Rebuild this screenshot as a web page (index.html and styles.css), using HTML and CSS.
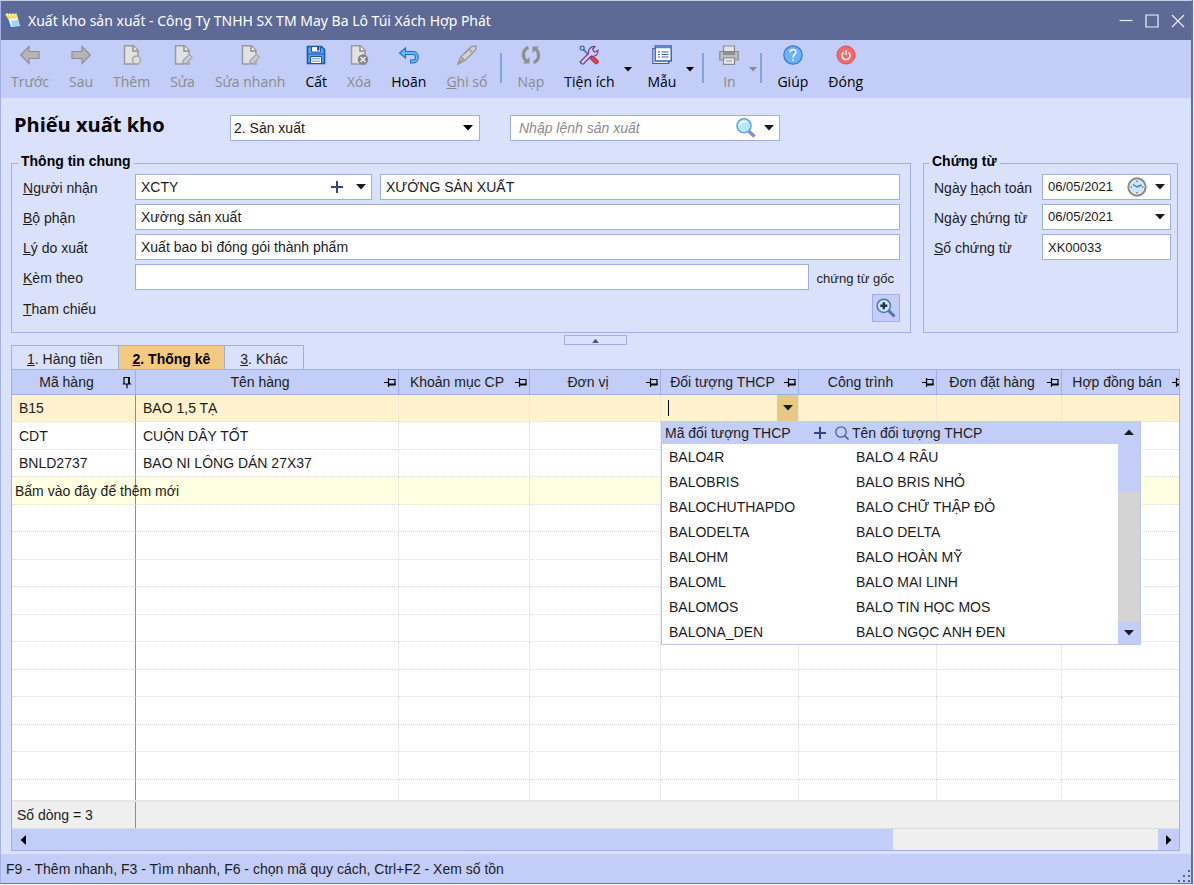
FILE: index.html
```html
<!DOCTYPE html>
<html lang="vi">
<head>
    <meta charset="UTF-8">
    <meta name="viewport" content="width=device-width, initial-scale=1.0">
    <title>Xuất kho sản xuất</title>
    <link rel="stylesheet" href="styles.css">
</head>
<body>

    <!-- Biểu tượng dùng chung -->
    <svg class="sprite" aria-hidden="true">
        <symbol id="arrow" viewBox="0 0 10 6"><path d="M0 0h10L5 5.500z" fill="currentColor"/></symbol>
        <symbol id="pin" viewBox="0 0 12 9">
            <path d="M0 4.500h4M4.500 0v9M4.500 1.500h6.500v5.500" fill="none" stroke="#000" stroke-width="1.200"/>
            <path d="M4.500 5.500h7v2h-7z"/>
        </symbol>
        <symbol id="page" viewBox="0 0 20 20">
            <path d="M2.500 .8h9l4.500 4.500v13.700h-13.500z" fill="#e2e2e2" stroke="#999" stroke-width="1.500"/>
            <path d="M11 1v5h5" fill="#f2f2f2" stroke="#8d8d8d" stroke-width="1.500"/>
        </symbol>
        <symbol id="page-edit" viewBox="0 0 20 20">
            <use href="#page"/>
            <path d="M9.500 19.300l.9-4 6-6 3 3-6 6z" fill="#ccc" stroke="#c2cef8" stroke-width="2"/>
            <path d="M9.500 19.300l.9-4 6-6 3 3-6 6z" fill="#ccc" stroke="#8d8d8d" stroke-width="1"/>
        </symbol>
        <symbol id="plus" viewBox="0 0 14 14"><path d="M7 1v12M1 7h12" stroke="#33467d" stroke-width="2" fill="none"/></symbol>
    </svg>

    <div class="window">
        <header class="titlebar">
            <svg class="logo" viewBox="0 0 18 18">
                <path d="M1 9l4 7 11-1-2-5z" fill="#3f66e8"/>
                <path d="M3 3l10 0 3 11-9 1z" fill="#e8f6fb"/>
                <path d="M7 9l7-1 1.500 5.500-7 .8z" fill="#9fd6ea"/>
                <path d="M1 2l11 0 1 4-9 1z" fill="#f6dc6a"/>
                <path d="M3 1v3M6 1v3M9 1v3M12 1v3" stroke="#fff7c8" stroke-width="1"/>
            </svg>
            <span class="caption">Xuất kho sản xuất - Công Ty TNHH SX TM May Ba Lô Túi Xách Hợp Phát</span>
            <button class="win-btn" aria-label="Thu nhỏ"><svg viewBox="0 0 14 14"><path d="M.5 6.500h13" stroke="#eef" stroke-width="1.200"/></svg></button>
            <button class="win-btn" aria-label="Phóng to"><svg viewBox="0 0 14 14"><path d="M1 1h12v12H1z" fill="none" stroke="#eef" stroke-width="1.200"/></svg></button>
            <button class="win-btn" aria-label="Đóng cửa sổ"><svg viewBox="0 0 14 14"><path d="M1 1l12 12M13 1L1 13" stroke="#eef" stroke-width="1.200"/></svg></button>
        </header>

        <nav class="toolbar">
            <button class="tool" disabled>
                <svg viewBox="0 0 20 20"><path d="M.8 10L9 1.500v5h10v7H9v5z" fill="#b5b5b5" stroke="#8f8f8f" stroke-width="1.200"/></svg>
                <span>Trước</span>
            </button>
            <button class="tool" disabled>
                <svg viewBox="0 0 20 20"><path d="M19.200 10L11 1.500v5H1v7h10v5z" fill="#b5b5b5" stroke="#8f8f8f" stroke-width="1.200"/></svg>
                <span>Sau</span>
            </button>
            <button class="tool" disabled>
                <svg viewBox="0 0 20 20">
                    <use href="#page"/>
                    <circle cx="14.500" cy="15" r="4" fill="#ddd" stroke="#aaa" stroke-width="1.600"/>
                </svg>
                <span>Thêm</span>
            </button>
            <button class="tool" disabled>
                <svg><use href="#page-edit"/></svg>
                <span>Sửa</span>
            </button>
            <button class="tool" disabled>
                <svg><use href="#page-edit"/></svg>
                <span>Sửa nhanh</span>
            </button>
            <button class="tool">
                <svg viewBox="0 0 20 20">
                    <path d="M1.500 1.500h14l3 3v14h-17z" fill="#5aa5ee" stroke="#1558b4" stroke-width="1.600"/>
                    <path d="M5.500 1.500h9v5.500h-9z" fill="#fff" stroke="#1558b4"/>
                    <path d="M11 2h2.500v3.500H11z" fill="#1558b4"/>
                    <path d="M1.500 9h17" stroke="#1558b4"/>
                    <path d="M4.500 11.500h11v7h-11z" fill="#fff" stroke="#1558b4"/>
                    <path d="M6 13.800h8M6 16.200h8" stroke="#6a8fce"/>
                </svg>
                <span>Cất</span>
            </button>
            <button class="tool" disabled>
                <svg viewBox="0 0 20 20">
                    <use href="#page"/>
                    <circle cx="14" cy="14.500" r="5.200" fill="#858585"/>
                    <path d="M11.500 12l5 5M16.500 12l-5 5" stroke="#eee" stroke-width="1.600"/>
                </svg>
                <span>Xóa</span>
            </button>
            <button class="tool">
                <svg viewBox="0 0 20 20">
                    <path d="M5 8h9.500c4.500 0 4.500 8.500 0 8.500H11" fill="none" stroke="#1f6fd0" stroke-width="4"/>
                    <path d="M.5 8l6-5v10z" fill="#6db6f8" stroke="#1f6fd0" stroke-width="1.200"/>
                    <path d="M5 8h9.500c4.500 0 4.500 8.500 0 8.500H12" fill="none" stroke="#6db6f8" stroke-width="1.800"/>
                </svg>
                <span>Hoãn</span>
            </button>
            <button class="tool" disabled>
                <svg viewBox="0 0 20 20">
                    <path d="M.8 19.300l3-7.500L14.500 1.500l4.500-.5-.5 4L8 15.500z" fill="#d2d2d2" stroke="#969696" stroke-width="1.300"/>
                    <path d="M4 11.800l4 3.800M12 4l3.800 3.800M1 19l5-5M7 9L13 3" fill="none" stroke="#969696" stroke-width="1.200"/>
                </svg>
                <span><u>G</u>hi sổ</span>
            </button>
            <span class="sep"></span>
            <button class="tool" disabled>
                <svg viewBox="0 0 20 20">
                    <path d="M7.500 2.500C1.500 4.500 1 11.500 5 16" fill="none" stroke="#8f8f8f" stroke-width="3.200"/>
                    <path d="M2 18.500h6.500V12z" fill="#8f8f8f"/>
                    <path d="M12.500 17.500C18.500 15.500 19 8.500 15 4" fill="none" stroke="#8f8f8f" stroke-width="3.200"/>
                    <path d="M18 1.500h-6.500V8z" fill="#8f8f8f"/>
                </svg>
                <span>Nạp</span>
            </button>
            <button class="tool">
                <svg viewBox="0 0 20 20">
                    <circle cx="3.200" cy="3.200" r="2" fill="none" stroke="#4c66a4" stroke-width="1.300"/>
                    <path d="M4.500 4.500l7 7.500" stroke="#4c66a4" stroke-width="1.500"/>
                    <path d="M11 13.500l2.500-2.500 5.500 4.500c1 2-1 4-3 3z" fill="#e94040" stroke="#a31e2e"/>
                    <path d="M3 19L1 17l8.500-8.500C9 4.500 11.500 1 16 1.500L13.500 4.500l2 2.500 3.500-1.700c.4 4.700-3 6.700-6.800 5.700L4.500 19z" fill="#d9c8f2" stroke="#6b3c93" stroke-width="1.200"/>
                </svg>
                <span>Tiện ích</span>
            </button>
            <button class="more" aria-label="Mở tiện ích"><svg><use href="#arrow"/></svg></button>
            <button class="tool">
                <svg viewBox="0 0 20 20">
                    <path d="M.8 3.500h16v15h-16z" fill="#e8eefc" stroke="#3f5fa8" stroke-width="1.200"/>
                    <path d="M3.200 1h16v15h-16z" fill="#fff" stroke="#3f5fa8" stroke-width="1.400"/>
                    <path d="M3.500 2.300h15.500" stroke="#5c87d6" stroke-width="2"/>
                    <path d="M6 7h2M6 9.500h2M6 12h2M9.500 7h7M9.500 9.500h7M9.500 12h7" stroke="#3f5fa8" stroke-width="1.200"/>
                </svg>
                <span>Mẫu</span>
            </button>
            <button class="more" aria-label="Mở danh sách mẫu"><svg><use href="#arrow"/></svg></button>
            <span class="sep"></span>
            <button class="tool" disabled>
                <svg viewBox="0 0 20 20">
                    <path d="M4.500 1h11v6h-11z" fill="#e4e4e4" stroke="#8a8a8a" stroke-width="1.200"/>
                    <path d="M.8 6.500h18.400v8.500H.8z" fill="#bdbdbd" stroke="#8a8a8a" stroke-width="1.200"/>
                    <path d="M4 7h12v3H4z" fill="#8f8f8f"/>
                    <path d="M4.500 13h11v6.300h-11z" fill="#eee" stroke="#8a8a8a" stroke-width="1.200"/>
                    <path d="M7 16h6" stroke="#8a8a8a"/>
                </svg>
                <span>In</span>
            </button>
            <button class="more" aria-label="Tùy chọn in" disabled><svg><use href="#arrow"/></svg></button>
            <span class="sep"></span>
            <button class="tool">
                <svg viewBox="0 0 20 20">
                    <circle cx="10" cy="10" r="9.200" fill="#6fb0fb" stroke="#3578d0" stroke-width="1.200"/>
                    <path d="M7.200 7.300c0-3.800 5.800-3.700 5.800-.3 0 2.300-3 2.500-3 5.500M10 14.300v1.600" fill="none" stroke="#fff" stroke-width="1.500"/>
                </svg>
                <span>Giúp</span>
            </button>
            <button class="tool">
                <svg viewBox="0 0 20 20">
                    <circle cx="10" cy="10" r="9" fill="#f8696b" stroke="#e24a50" stroke-width="1"/>
                    <path d="M7.500 7.300a4 4 0 1 0 5 0M10 5v5" fill="none" stroke="#fff" stroke-width="1.500"/>
                </svg>
                <span>Đóng</span>
            </button>
        </nav>

        <main class="content">
            <div class="heading">
                <h1>Phiếu xuất kho</h1>
                <select class="field type-select" aria-label="Loại phiếu">
                    <option>2. Sản xuất</option>
                </select>
                <div class="field combo search">
                    <input type="text" placeholder="Nhập lệnh sản xuất" aria-label="Lệnh sản xuất">
                    <button aria-label="Tìm lệnh">
                        <svg class="lens" viewBox="0 0 20 20">
                            <path d="M12.500 13l6 5.500" stroke="#8f87d8" stroke-width="3.600"/>
                            <circle cx="8" cy="7.800" r="7" fill="#b9e8f8" stroke="#5aa9dc" stroke-width="1.600"/>
                            <path d="M3.500 7c1-3 4-4.500 7-3" fill="none" stroke="#ecfaff" stroke-width="2"/>
                        </svg>
                    </button>
                    <button aria-label="Mở danh sách lệnh"><svg class="arrow"><use href="#arrow"/></svg></button>
                </div>
            </div>

            <div class="groups">
                <fieldset class="general">
                    <legend>Thông tin chung</legend>
                    <div class="form-grid">
                        <label for="receiver"><u>N</u>gười nhận</label>
                        <div class="line">
                            <div class="field combo receiver">
                                <input type="text" id="receiver" value="XCTY">
                                <button aria-label="Thêm người nhận"><svg class="plus"><use href="#plus"/></svg></button>
                                <button aria-label="Chọn người nhận"><svg class="arrow"><use href="#arrow"/></svg></button>
                            </div>
                            <input type="text" class="field grow" value="XƯỞNG SẢN XUẤT" aria-label="Tên người nhận">
                        </div>
                        <label for="dept"><u>B</u>ộ phận</label>
                        <input type="text" class="field" id="dept" value="Xưởng sản xuất">
                        <label for="reason"><u>L</u>ý do xuất</label>
                        <input type="text" class="field" id="reason" value="Xuất bao bì đóng gói thành phẩm">
                        <label for="attach"><u>K</u>èm theo</label>
                        <div class="line">
                            <input type="text" class="field grow" id="attach">
                            <span class="suffix">chứng từ gốc</span>
                        </div>
                        <label for="ref"><u>T</u>ham chiếu</label>
                        <button class="ref-btn" id="ref">
                            <svg viewBox="0 0 20 20">
                                <path d="M12 12l6.500 6.500" stroke="#5a6db8" stroke-width="3"/>
                                <circle cx="7.800" cy="7.800" r="6.600" fill="#c4eafa" stroke="#5870b4" stroke-width="1.500"/>
                                <path d="M7.800 4.300v7M4.300 7.800h7" stroke="#263040" stroke-width="2.400"/>
                            </svg>
                        </button>
                    </div>
                </fieldset>

                <fieldset class="voucher">
                    <legend>Chứng từ</legend>
                    <div class="form-grid">
                        <label for="post-date">Ngày <u>h</u>ạch toán</label>
                        <div class="field combo">
                            <input type="text" id="post-date" value="06/05/2021">
                            <button aria-label="Chọn giờ">
                                <svg class="clock" viewBox="0 0 20 20">
                                    <circle cx="10" cy="10" r="8.600" fill="#c2e9f8" stroke="#8c8c8c" stroke-width="2.200"/>
                                    <circle cx="10" cy="10" r="7" fill="none" stroke="#eee" stroke-width="1"/>
                                    <path d="M10 10L6 7.500M10 10l4.500-2" stroke="#3f7fae" stroke-width="1.400"/>
                                    <path d="M10 3.500v1.500M10 15v1.500M3.500 10H5M15 10h1.500" stroke="#e05050" stroke-width="1.500"/>
                                </svg>
                            </button>
                            <button aria-label="Mở lịch hạch toán"><svg class="arrow"><use href="#arrow"/></svg></button>
                        </div>
                        <label for="doc-date">Ngày <u>c</u>hứng từ</label>
                        <div class="field combo">
                            <input type="text" id="doc-date" value="06/05/2021">
                            <button aria-label="Mở lịch chứng từ"><svg class="arrow"><use href="#arrow"/></svg></button>
                        </div>
                        <label for="doc-no"><u>S</u>ố chứng từ</label>
                        <input type="text" class="field" id="doc-no" value="XK00033">
                    </div>
                </fieldset>
            </div>

            <button class="collapse" aria-label="Thu gọn"><svg viewBox="0 0 10 6"><path d="M1 6L5 1l4 5z" fill="#555"/></svg></button>

            <div class="tabs" role="tablist">
                <button class="tab" role="tab"><u>1</u>. Hàng tiền</button>
                <button class="tab active" role="tab" aria-selected="true"><u>2</u>. Thống kê</button>
                <button class="tab" role="tab"><u>3</u>. Khác</button>
            </div>

            <div class="grid">
                <div class="grid-body">
                    <table class="items">
                        <colgroup>
                            <col class="c-code"><col><col class="c-mid"><col class="c-mid"><col class="c-object"><col class="c-object"><col class="c-order"><col class="c-order">
                        </colgroup>
                        <thead>
                            <tr>
                                <th><div class="th"><span>Mã hàng</span><svg class="pin pinned"><use href="#pin"/></svg></div></th>
                                <th><div class="th"><span>Tên hàng</span><svg class="pin"><use href="#pin"/></svg></div></th>
                                <th><div class="th"><span>Khoản mục CP</span><svg class="pin"><use href="#pin"/></svg></div></th>
                                <th><div class="th"><span>Đơn vị</span><svg class="pin"><use href="#pin"/></svg></div></th>
                                <th><div class="th"><span>Đối tượng THCP</span><svg class="pin"><use href="#pin"/></svg></div></th>
                                <th><div class="th"><span>Công trình</span><svg class="pin"><use href="#pin"/></svg></div></th>
                                <th><div class="th"><span>Đơn đặt hàng</span><svg class="pin"><use href="#pin"/></svg></div></th>
                                <th><div class="th"><span>Hợp đồng bán</span><svg class="pin"><use href="#pin"/></svg></div></th>
                            </tr>
                        </thead>
                        <tbody>
                            <tr class="current">
                                <td>B15</td><td>BAO 1,5 TẠ</td><td></td><td></td>
                                <td class="editing">
                                    <div class="editor">
                                        <span class="caret"></span>
                                        <input type="text" aria-label="Đối tượng THCP">
                                        <button aria-label="Chọn đối tượng THCP"><svg class="arrow"><use href="#arrow"/></svg></button>
                                    </div>
                                    <div class="popup">
                                        <table class="lookup">
                                            <colgroup><col class="c-lookup"><col></colgroup>
                                            <thead>
                                                <tr>
                                                    <th>
                                                        <div class="lookup-head">
                                                            <span>Mã đối tượng THCP</span>
                                                            <button aria-label="Thêm đối tượng"><svg class="plus"><use href="#plus"/></svg></button>
                                                            <button aria-label="Tìm đối tượng"><svg class="plus" viewBox="0 0 14 14"><circle cx="6" cy="6" r="5.200" fill="none" stroke="#4c5f98" stroke-width="1.300"/><path d="M9.500 9.500l4 4" stroke="#4c5f98" stroke-width="1.600"/></svg></button>
                                                        </div>
                                                    </th>
                                                    <th>Tên đối tượng THCP</th>
                                                </tr>
                                            </thead>
                                            <tbody>
                                                <tr><td>BALO4R</td><td>BALO 4 RÂU</td></tr>
                                                <tr><td>BALOBRIS</td><td>BALO BRIS NHỎ</td></tr>
                                                <tr><td>BALOCHUTHAPDO</td><td>BALO CHỮ THẬP ĐỎ</td></tr>
                                                <tr><td>BALODELTA</td><td>BALO DELTA</td></tr>
                                                <tr><td>BALOHM</td><td>BALO HOÀN MỸ</td></tr>
                                                <tr><td>BALOML</td><td>BALO MAI LINH</td></tr>
                                                <tr><td>BALOMOS</td><td>BALO TIN HỌC MOS</td></tr>
                                                <tr><td>BALONA_DEN</td><td>BALO NGỌC ANH ĐEN</td></tr>
                                            </tbody>
                                        </table>
                                        <div class="vscroll">
                                            <button aria-label="Cuộn lên"><svg class="arrow up"><use href="#arrow"/></svg></button>
                                            <span class="vthumb"></span>
                                            <button aria-label="Cuộn xuống"><svg class="arrow"><use href="#arrow"/></svg></button>
                                        </div>
                                    </div>
                                </td>
                                <td></td><td></td><td></td>
                            </tr>
                            <tr><td>CDT</td><td>CUỘN DÂY TỐT</td><td></td><td></td><td></td><td></td><td></td><td></td></tr>
                            <tr><td>BNLD2737</td><td>BAO NI LÔNG DÁN 27X37</td><td></td><td></td><td></td><td></td><td></td><td></td></tr>
                            <tr class="new-row"><td>Bấm vào đây để thêm mới</td><td></td><td></td><td></td><td></td><td></td><td></td><td></td></tr>
                            <tr><td></td><td></td><td></td><td></td><td></td><td></td><td></td><td></td></tr>
                            <tr><td></td><td></td><td></td><td></td><td></td><td></td><td></td><td></td></tr>
                            <tr><td></td><td></td><td></td><td></td><td></td><td></td><td></td><td></td></tr>
                            <tr><td></td><td></td><td></td><td></td><td></td><td></td><td></td><td></td></tr>
                            <tr><td></td><td></td><td></td><td></td><td></td><td></td><td></td><td></td></tr>
                            <tr><td></td><td></td><td></td><td></td><td></td><td></td><td></td><td></td></tr>
                            <tr><td></td><td></td><td></td><td></td><td></td><td></td><td></td><td></td></tr>
                            <tr><td></td><td></td><td></td><td></td><td></td><td></td><td></td><td></td></tr>
                            <tr><td></td><td></td><td></td><td></td><td></td><td></td><td></td><td></td></tr>
                            <tr><td></td><td></td><td></td><td></td><td></td><td></td><td></td><td></td></tr>
                            <tr><td></td><td></td><td></td><td></td><td></td><td></td><td></td><td></td></tr>
                        </tbody>
                    </table>
                </div>
                <div class="summary"><span>Số dòng = 3</span></div>
                <div class="hscroll">
                    <button aria-label="Cuộn trái"><svg viewBox="0 0 6 10"><path d="M6 0v10L.5 5z"/></svg></button>
                    <span class="hthumb"></span>
                    <span class="htrack"></span>
                    <button aria-label="Cuộn phải"><svg viewBox="0 0 6 10"><path d="M0 0v10l5.500-5z"/></svg></button>
                </div>
            </div>
        </main>

        <footer class="statusbar">
            <span>F9 - Thêm nhanh, F3 - Tìm nhanh, F6 - chọn mã quy cách, Ctrl+F2 - Xem số tồn</span>
            <svg class="grip" viewBox="0 0 14 14"><path d="M11 1h2v2h-2zM6 6h2v2H6zM11 6h2v2h-2zM1 11h2v2H1zM6 11h2v2H6zM11 11h2v2h-2z" fill="#4f5f9c"/></svg>
        </footer>
    </div>

</body>
</html>
```
FILE: styles.css
```css
* {
    box-sizing: border-box;
}

body {
    margin: 0;
    padding: 0 1px 1px 0;
    height: 100vh;
    background: #eef0f6;
    font-family: "Liberation Sans", Arial, sans-serif;
    font-size: 14px;
    line-height: 16px;
    color: #1c1c1c;
}

button, input, select {
    font: inherit;
    color: inherit;
}

button {
    margin: 0;
    padding: 0;
    border: 0;
    background: none;
    display: flex;
    align-items: center;
    justify-content: center;
}

svg {
    display: block;
    flex: none;
}

.sprite {
    display: none;
}

.window {
    display: flex;
    flex-direction: column;
    height: 100%;
    border: 1px solid #a3b1e4;
    border-top-color: #c7cfe6;
    border-right: 2px solid #5f6e9e;
    border-bottom-color: #6c79a8;
    background: #dae1fb;
}

/* Thanh tiêu đề */
.titlebar {
    display: flex;
    align-items: center;
    height: 39px;
    padding-left: 3px;
    background: #5d6a96;
    color: #fff;
    font-family: "Noto Sans", "Open Sans", sans-serif;
}

.logo {
    width: 18px;
    height: 18px;
}

.caption {
    flex: 1;
    margin-left: 6px;
}

.win-btn {
    width: 26px;
    height: 26px;
}

.win-btn svg {
    width: 14px;
    height: 14px;
}

/* Thanh công cụ */
.toolbar {
    display: flex;
    height: 58px;
    background: #c2cef8;
    font-family: "Open Sans", "Noto Sans", sans-serif;
}

.tool {
    flex-direction: column;
    justify-content: flex-start;
    gap: 7px;
    padding: 5px 10px 0;
    line-height: 20px;
    color: #000;
}

.tool:disabled,
.more:disabled {
    color: #8a8a8a;
}

.tool svg {
    width: 20px;
    height: 20px;
}

.more {
    width: 8px;
    margin-right: 5px;
    color: #000;
}

.more:disabled {
    margin-right: 0;
}

.more svg {
    width: 8px;
    height: 5px;
}

.sep {
    width: 2px;
    height: 30px;
    margin: 13px 5px 0 3px;
    background: #7da6dc;
}

/* Nội dung */
.content {
    flex: 1;
    display: flex;
    flex-direction: column;
    min-height: 0;
    padding: 17px 11px 3px 10px;
}

.heading {
    display: flex;
    margin-bottom: 12px;
    padding-left: 3px;
}

h1 {
    width: 216px;
    margin: 0;
    font-family: "Open Sans", "Noto Sans", sans-serif;
    font-size: 20px;
    line-height: 20px;
    color: #000;
}

.field {
    width: 100%;
    min-width: 0;
    height: 26px;
    padding: 0 5px;
    border: 1px solid #9fafe6;
    border-radius: 0;
    background: #fff;
    outline: none;
}

select.field {
    appearance: none;
    padding: 0 3px;
    background: #fff url("data:image/svg+xml,%3Csvg xmlns='http://www.w3.org/2000/svg' width='10' height='6'%3E%3Cpath d='M0 0h10L5 5.500z'/%3E%3C/svg%3E") no-repeat right 6px center;
}

.type-select {
    width: 250px;
}

.combo {
    display: flex;
    align-items: center;
    gap: 8px;
}

.combo input {
    flex: 1;
    width: 0;
    min-width: 0;
    padding: 0;
    border: 0;
    outline: none;
    background: none;
}

.search {
    width: 270px;
    margin-left: 30px;
    padding-left: 8px;
}

.search input::placeholder {
    color: #8c8c8c;
    font-style: italic;
}

.arrow {
    width: 10px;
    height: 6px;
}

.arrow.up {
    transform: rotate(180deg);
}

.lens,
.clock {
    width: 20px;
    height: 20px;
}

.plus {
    width: 14px;
    height: 14px;
}

.groups {
    display: flex;
    gap: 12px;
    padding-right: 2px;
}

fieldset {
    min-width: 0;
    margin: 0;
    border: 1px solid #9fafe6;
}

.general {
    flex: 1;
    padding: 1px 10px 10px 11px;
}

.voucher {
    width: 255px;
    padding: 1px 6px 10px 10px;
}

legend {
    margin-left: -5px;
    padding: 0 3px 4px;
    font-weight: bold;
    color: #000;
}

.form-grid {
    display: grid;
    grid-template-columns: 112px 1fr;
    gap: 4px 0;
    align-items: center;
}

.voucher .form-grid {
    grid-template-columns: 108px 1fr;
}

.voucher input {
    font-size: 13px;
}

.form-grid label {
    padding-top: 2px;
}

.line {
    display: flex;
    align-items: center;
    gap: 8px;
}

.line .grow {
    flex: 1;
}

.receiver {
    flex: none;
    gap: 12px;
    width: 237px;
}

.suffix {
    padding: 3px 6px 0 0;
    font-size: 13px;
}

.ref-btn {
    justify-self: end;
    width: 28px;
    height: 28px;
    border: 1px solid #9fafe6;
    background: #c2cef8;
}

.ref-btn svg {
    width: 20px;
    height: 20px;
}

.collapse {
    align-self: center;
    width: 63px;
    height: 10px;
    margin-top: 2px;
    border: 1px solid #9fafe6;
}

.collapse svg {
    width: 9px;
    height: 5px;
}

.tabs {
    display: flex;
}

.tab {
    height: 24px;
    padding: 3px 15px 0;
    border: 1px solid #9fafe6;
    border-bottom: 0;
    border-right: 0;
}

.tab:last-child {
    border-right: 1px solid #9fafe6;
}

.tab.active {
    padding: 3px 14px 0;
    background: #f4ca81;
    font-weight: bold;
    color: #000;
}

/* Lưới chi tiết */
.grid {
    flex: 1;
    display: flex;
    flex-direction: column;
    min-height: 0;
    border: 1px solid #9fafe6;
    background: #fff;
}

.grid-body {
    flex: 1;
    min-height: 0;
    overflow: hidden;
}

.items {
    width: calc(100% + 8px);
    table-layout: fixed;
    border-spacing: 0;
}

.c-code { width: 124px; }
.c-mid { width: 131px; }
.c-object { width: 138px; }
.c-order { width: 125px; }

.items > thead th {
    height: 25px;
    padding: 0 2px 0 0;
    border-right: 1px solid #9fafe6;
    border-bottom: 1px solid #9fafe6;
    background: #c2cef8;
    font-weight: normal;
}

.th {
    display: flex;
    align-items: center;
}

.th span {
    flex: 1;
    text-align: center;
    white-space: nowrap;
}

.pin {
    width: 12px;
    height: 9px;
}

.pinned {
    transform: rotate(-90deg);
}

.items > tbody > tr > td {
    height: 27px;
    padding: 0 7px;
    border-right: 1px dotted #dcdcdc;
    border-bottom: 1px dotted #dcdcdc;
    white-space: nowrap;
}

.items > tbody > tr:nth-child(even) > td {
    height: 28px;
}

.items > tbody > tr > td:first-child {
    border-right: 1px solid #8e8e8e;
}

.current {
    background: #fff2cc;
}

.new-row {
    background: #ffffe1;
}

.items > tbody > .new-row > td {
    padding: 0 3px;
}

.items > tbody > tr > .editing {
    position: relative;
    padding: 0;
}

.editor {
    display: flex;
    align-items: center;
    height: 26px;
    padding-left: 7px;
}

.caret {
    width: 1px;
    height: 16px;
    background: #000;
}

.editor input {
    flex: 1;
    min-width: 0;
    width: 0;
    border: 0;
    outline: none;
    background: none;
}

.editor button {
    width: 21px;
    height: 26px;
    background: #e5ca85;
}

.popup {
    position: absolute;
    top: 100%;
    left: 0;
    z-index: 1;
    display: flex;
    width: 480px;
    border: 1px solid #b9c6e4;
    border-top: 0;
    background: #fff;
}

.lookup {
    flex: 1;
    table-layout: fixed;
    border-spacing: 0;
}

.c-lookup { width: 187px; }

.lookup th {
    height: 23px;
    padding: 1px 0 0 3px;
    background: #c2cef8;
    font-weight: normal;
    text-align: left;
}

.lookup td {
    height: 25px;
    padding: 0 0 0 7px;
}

.lookup-head {
    display: flex;
    align-items: center;
    gap: 8px;
}

.lookup-head span {
    flex: 1;
}

.vscroll {
    display: flex;
    flex-direction: column;
    width: 22px;
    background: #d4d4d4;
}

.vscroll button {
    height: 22px;
    background: #c2cef8;
}

.vthumb {
    height: 49px;
    margin-bottom: auto;
    background: #c2cef8;
}

.summary {
    height: 29px;
    border-top: 2px solid #e6e6e6;
    border-bottom: 1px solid #dcdcdc;
    background: #efefef;
}

.summary span {
    display: flex;
    align-items: center;
    width: 124px;
    height: 26px;
    padding-left: 5px;
    border-right: 1px solid #8e8e8e;
}

.hscroll {
    display: flex;
    height: 21px;
}

.hscroll button {
    width: 21px;
    background: #c2cef8;
}

.hscroll svg {
    width: 6px;
    height: 10px;
}

.hthumb {
    flex: 860;
    background: #c2cef8;
}

.htrack {
    flex: 265;
    background: #efefef;
}

.statusbar {
    display: flex;
    justify-content: space-between;
    align-items: center;
    height: 29px;
    padding-left: 5px;
    background: #c2cef8;
}

.grip {
    align-self: flex-end;
    width: 14px;
    height: 14px;
}
```
